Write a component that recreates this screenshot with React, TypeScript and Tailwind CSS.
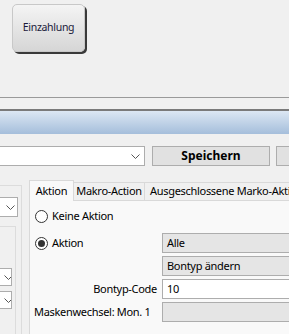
const font = "font-['Noto_Sans',_'Open_Sans',_sans-serif]";

function Chevron({ className = "" }: { className?: string }) {
  return (
    <svg width="9" height="5" viewBox="0 0 9 5" className={className}>
      <path d="M0.5 0.5 L4.5 4.5 L8.5 0.5" fill="none" stroke="#555" strokeWidth="1" />
    </svg>
  );
}

function Radio({ checked }: { checked?: boolean }) {
  return (
    <span className="flex h-[13px] w-[13px] shrink-0 items-center justify-center rounded-full border border-[#333] bg-white">
      {checked && <span className="h-[7px] w-[7px] rounded-full bg-[#333]" />}
    </span>
  );
}

function Field({ value, white }: { value?: string; white?: boolean }) {
  return (
    <div
      className={`flex h-[20px] w-[160px] shrink-0 items-center border border-[#adadad] px-[4px] text-black ${
        white ? "bg-white" : "bg-[#e5e5e5]"
      }`}
    >
      {value}
    </div>
  );
}

function MiniCombo() {
  return (
    <div className="flex h-[18px] w-[12px] items-center justify-end overflow-hidden border border-l-0 border-[#adadad] bg-white">
      <Chevron className="-mr-[2px] shrink-0" />
    </div>
  );
}

export default function App() {
  return (
    <div className={`relative h-[334px] w-[289px] overflow-hidden bg-[#f0f0f0] text-[11px] tracking-[-0.3px] ${font}`}>
      {/* top button area */}
      <div className="h-[97px] pl-[12px] pt-[4px]">
        <button
          type="button"
          className="flex h-[48px] w-[73px] items-center justify-center rounded-[5px] border border-[#c8c8c8] bg-gradient-to-b from-[#f4f4f4] to-[#d6d6d6] text-[10.5px] tracking-[-0.3px] text-[#1a1a3a] shadow-[2px_2px_0_#3a3a3a]"
        >
          Einzahlung
        </button>
      </div>

      <div className="h-[12px] border-t border-[#9a9a9a]" />
      <div className="h-[2px] bg-[#7a7a7a]" />
      <div className="h-[23px] bg-gradient-to-b from-[#dce7f3] to-[#a5bedb]" />

      {/* toolbar */}
      <div className="mt-[12px] flex h-[20px] items-stretch">
        <div className="flex w-[145px] shrink-0 items-center justify-end border border-l-0 border-[#adadad] bg-white pr-[4px]">
          <Chevron />
        </div>
        <button
          type="button"
          className="ml-[7px] w-[118px] shrink-0 border border-[#adadad] bg-[#e1e1e1] text-[12px] font-bold tracking-[0px] text-black"
        >
          Speichern
        </button>
        <button type="button" className="ml-[6px] w-[40px] shrink-0 border border-[#adadad] bg-[#e1e1e1]" />
      </div>

      {/* body */}
      <div className="flex">
        {/* left panel */}
        <div className="w-[29px] shrink-0">
          <div className="mt-[19px] flex h-[200px] w-[22px] flex-col border-r border-t border-[#dcdcdc]">
            <div className="h-[11px] shrink-0" />
            <div className="flex h-[20px] w-[18px] shrink-0 items-center justify-end border border-l-0 border-[#adadad] bg-white pr-[2px]">
              <Chevron />
            </div>
            <div className="h-[9px] shrink-0" />
            <div className="flex w-[16px] flex-1 flex-col border-r border-t border-[#dcdcdc]">
              <div className="h-[41px] shrink-0" />
              <MiniCombo />
              <div className="h-[5px] shrink-0" />
              <MiniCombo />
            </div>
          </div>
        </div>

        {/* tab control */}
        <div className="mt-[14px] w-[300px] shrink-0">
          <div className="flex h-[20px] items-end text-black">
            <div className="relative z-10 -mb-px flex h-[21px] w-[45px] shrink-0 items-start justify-center border border-b-0 border-[#d9d9d9] bg-[#f9f9f9] pt-[2px]">
              Aktion
            </div>
            <div className="flex h-[18px] w-[71px] shrink-0 items-center justify-center whitespace-nowrap border border-l-0 border-b-0 border-[#d9d9d9] bg-[#f0f0f0]">
              Makro-Action
            </div>
            <div className="flex h-[18px] shrink-0 items-center whitespace-nowrap border border-l-0 border-b-0 border-[#d9d9d9] bg-[#f0f0f0] pl-[5px] pr-[6px]">
              Ausgeschlossene Marko-Aktion
            </div>
          </div>
          <div className="h-[140px] border border-[#d9d9d9] bg-[#f9f9f9] text-black">
            <div className="ml-[5px] mt-[8px] flex h-[14px] items-center gap-[4px]">
              <Radio />
              <span>Keine Aktion</span>
            </div>
            <div className="mt-[10px] flex flex-col gap-[3px]">
              <div className="flex items-center">
                <div className="flex w-[132px] shrink-0 items-center gap-[4px] pl-[5px]">
                  <Radio checked />
                  <span>Aktion</span>
                </div>
                <Field value="Alle" />
              </div>
              <div className="flex items-center">
                <span className="w-[132px] shrink-0" />
                <Field value="Bontyp ändern" />
              </div>
              <div className="flex items-center">
                <span className="w-[127px] shrink-0 text-right">Bontyp-Code</span>
                <span className="w-[5px] shrink-0" />
                <Field value="10" white />
              </div>
              <div className="flex items-center">
                <span className="w-[132px] shrink-0 whitespace-nowrap pl-[4px]">Maskenwechsel: Mon. 1</span>
                <Field />
              </div>
            </div>
          </div>
        </div>
      </div>
    </div>
  );
}
